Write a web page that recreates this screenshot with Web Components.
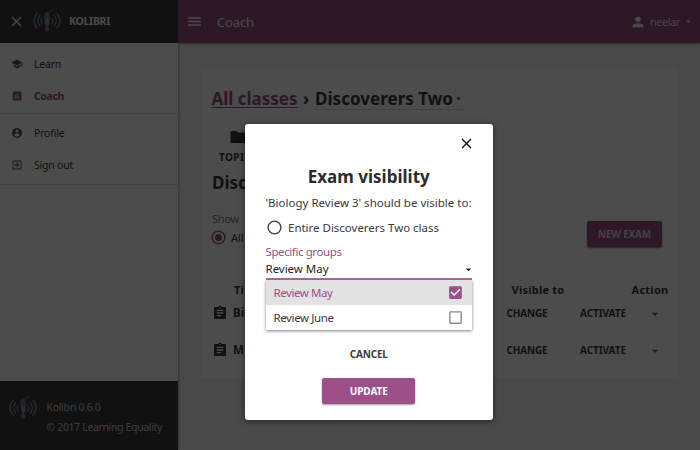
<!DOCTYPE html>
<html lang="en"><head><meta charset="utf-8"><title>Kolibri</title>
<style>
html,body{margin:0;height:100%;overflow:hidden;background:#f5f5f5}
body{font-family:"Noto Sans","Noto Sans CJK SC",sans-serif;font-size:11px;color:#3a3a3a}
</style></head><body>
<kolibri-app></kolibri-app>
<script>
const define=(name,html,after)=>customElements.define(name,class extends HTMLElement{
  connectedCallback(){
    if(this.shadowRoot)return;
    const t=document.createElement('template');t.innerHTML=html;
    this.attachShadow({mode:'open'}).append(t.content.cloneNode(true));
    if(after)after(this,this.shadowRoot);
  }
});

/* A single line of text, tracked to fill the width given in "w". */
define('fit-text',`<style>:host{display:block;white-space:nowrap;flex:none;line-height:16px}span{display:inline-block;text-decoration:inherit;text-underline-offset:inherit}</style><span><slot></slot></span>`,
(el,root)=>{
  const w=+el.getAttribute('w');if(!w)return;
  el.style.width=w+'px';
  const s=root.querySelector('span');
  s.style.letterSpacing=((w-s.getBoundingClientRect().width)/el.textContent.length)+'px';
});

const icons={
 close:'<path d="M19 6.4 17.6 5 12 10.6 6.4 5 5 6.4l5.6 5.6L5 17.6 6.4 19l5.6-5.6 5.6 5.6 1.4-1.4-5.6-5.6z"/>',
 menu:'<path d="M3 18h18v-2H3zm0-5h18v-2H3zm0-7v2h18V6z"/>',
 school:'<path d="M5 13.18v4L12 21l7-3.82v-4L12 17zM12 3 1 9l11 6 9-4.91V17h2V9z"/>',
 chart:'<path d="M19 3H5a2 2 0 0 0-2 2v14a2 2 0 0 0 2 2h14a2 2 0 0 0 2-2V5a2 2 0 0 0-2-2zM9 17H7v-7h2zm4 0h-2V7h2zm4 0h-2v-4h2z"/>',
 account:'<path d="M12 2a10 10 0 1 0 0 20 10 10 0 0 0 0-20zm0 3a3 3 0 1 1 0 6 3 3 0 0 1 0-6zm0 14.2a7.2 7.2 0 0 1-6-3.22c.03-1.99 4-3.08 6-3.08s5.970 1.090 6 3.080a7.200 7.200 0 0 1-6 3.220z"/>',
 exit:'<path d="M10.090 15.590 11.500 17l5-5-5-5-1.410 1.410L12.670 11H3v2h9.670zM19 3H5a2 2 0 0 0-2 2v4h2V5h14v14H5v-4H3v4a2 2 0 0 0 2 2h14a2 2 0 0 0 2-2V5a2 2 0 0 0-2-2z"/>',
 person:'<path d="M12 12a4 4 0 1 0 0-8 4 4 0 0 0 0 8zm0 2c-2.670 0-8 1.340-8 4v2h16v-2c0-2.660-5.330-4-8-4z"/>',
 caret:'<path d="m7 10 5 5 5-5z"/>',
 folder:'<path d="M10 4H4a2 2 0 0 0-2 2v12a2 2 0 0 0 2 2h16a2 2 0 0 0 2-2V8a2 2 0 0 0-2-2h-8z"/>',
 clipboard:'<path d="M19 3h-4.180a3 3 0 0 0-5.640 0H5a2 2 0 0 0-2 2v14a2 2 0 0 0 2 2h14a2 2 0 0 0 2-2V5a2 2 0 0 0-2-2zm-7 0a1 1 0 1 1 0 2 1 1 0 0 1 0-2zm2 14H7v-2h7zm3-4H7v-2h10zm0-4H7V7h10z"/>',
 checked:'<path d="M19 3H5a2 2 0 0 0-2 2v14a2 2 0 0 0 2 2h14a2 2 0 0 0 2-2V5a2 2 0 0 0-2-2zm-9 14-5-5 1.410-1.410L10 14.170l7.590-7.590L19 8z"/>',
 unchecked:'<path d="M19 5v14H5V5zm0-2H5a2 2 0 0 0-2 2v14a2 2 0 0 0 2 2h14a2 2 0 0 0 2-2V5a2 2 0 0 0-2-2z"/>',
 radio:'<path d="M12 2a10 10 0 1 0 0 20 10 10 0 0 0 0-20zm0 18a8 8 0 1 1 0-16 8 8 0 0 1 0 16z"/>',
 radioOn:'<path d="M12 2a10 10 0 1 0 0 20 10 10 0 0 0 0-20zm0 18a8 8 0 1 1 0-16 8 8 0 0 1 0 16z"/><circle cx="12" cy="12" r="5"/>'
};
define('ui-icon',`<style>:host{display:block;flex:none}svg{display:block;width:100%;height:100%;fill:currentColor}</style><svg viewBox="0 0 24 24"></svg>`,
(el,root)=>{const s=el.getAttribute('size');el.style.width=el.style.height=s+'px';root.querySelector('svg').innerHTML=icons[el.getAttribute('name')]});

define('bird-logo',`<style>:host{display:block;flex:none;width:30px;height:26px}svg{display:block}</style>
<svg width="30" height="26" viewBox="0 0 30 26" fill="none">
<g stroke="#8d7c98" stroke-width="1.300"><path d="M5.500 5Q-1.500 13 5.500 20.500"/><path d="M24.500 5q7 8 0 15.500"/></g>
<g stroke="#8292a3" stroke-width="1.200"><path d="M8 7q-4.500 6 0 11.500"/><path d="M22 7q4.500 6 0 11.500"/><path d="M10.500 9.500q-2.500 3.500 0 7"/><path d="M19.500 9.500q2.500 3.500 0 7"/></g>
<path d="M22 1c-2.500 1.800-5 2-5.500 3.700" stroke="#7d8e87" stroke-width="1"/>
<path d="M13 5q2-2 4.200 0l.6 4-.4 7q-2.300 3-4.500 0l-.5-6z" fill="#708088"/><path d="m13 10 3 2 1-3v8h-3z" fill="#8da4a8"/>
<path d="M14.300 16 12.800 22q2.200 3.500 4.400 0L15.800 16z" fill="#a36d99"/>
</svg>`);

define('nav-item',`<style>:host{display:flex;align-items:center;height:31.500px;padding-left:11px;color:#3a3a3a;font-size:10.500px}slot[name=icon]::slotted(*){margin-right:11px}:host(:not(.on)) slot[name=icon]::slotted(*){color:#555}</style><slot name="icon"></slot><slot></slot>`);

define('side-nav',`<style>
:host{display:flex;flex-direction:column;width:178px;height:450px;background:#fff;box-shadow:1px 0 2px rgba(0,0,0,.3)}
header{height:43px;background:#3a3a3a;color:#f5f5f5;display:flex;align-items:center;padding-left:7.500px;box-sizing:border-box}
header bird-logo{margin:-1px 7px 0 7.500px}header fit-text{font-weight:700;font-size:10.500px;margin-top:-1px}
nav{padding-top:5px;flex:1}
section{border-bottom:1px solid #e0e0e0;box-sizing:border-box}
section:first-child{height:66px;padding-top:.500px}section:last-child{height:71px;padding-top:3.500px}
.on{color:#9c5087;font-weight:700}
footer{height:69px;background:#3a3a3a;color:#c8c8c8;display:flex;box-sizing:border-box;padding:14px 0 0 7.500px;gap:9px;font-size:10.500px}
footer div{display:flex;flex-direction:column;gap:4px;padding-top:4px}
</style>
<header><ui-icon name="close" size="17"></ui-icon><bird-logo></bird-logo><fit-text w="41">KOLIBRI</fit-text></header>
<nav><section>
<nav-item><ui-icon slot="icon" name="school" size="12"></ui-icon><fit-text w="27">Learn</fit-text></nav-item>
<nav-item class="on"><ui-icon slot="icon" name="chart" size="12"></ui-icon><fit-text w="30">Coach</fit-text></nav-item></section><section>
<nav-item><ui-icon slot="icon" name="account" size="12"></ui-icon><fit-text w="30.500">Profile</fit-text></nav-item>
<nav-item><ui-icon slot="icon" name="exit" size="12"></ui-icon><fit-text w="39">Sign out</fit-text></nav-item></section></nav>
<footer><bird-logo></bird-logo><div><fit-text w="54">Kolibri 0.6.0</fit-text><fit-text w="115.500">© 2017 Learning Equality</fit-text></div></footer>`);

define('app-bar',`<style>
:host{display:flex;align-items:center;height:43px;box-sizing:border-box;padding:0 6px 0 8px;background:#9c5087;color:#f5f5f5;box-shadow:0 1px 2px rgba(0,0,0,.35)}
.title{font-size:13px;margin-left:14px;flex:1}.user{margin:0 3px 0 4.500px;color:#dcdcdc}
</style><ui-icon name="menu" size="17"></ui-icon><div class="title"><fit-text w="37">Coach</fit-text></div>
<ui-icon name="person" size="16"></ui-icon><fit-text class="user" w="30">neelar</fit-text><ui-icon name="caret" size="11"></ui-icon>`);

define('exam-row',`<style>
:host{display:grid;grid-template-columns:21px 273.500px 73.500px 67px 16px;align-items:center;height:37px;padding-left:11px;font-weight:700;color:#3a3a3a}
ui-icon[name=caret]{color:#9c5087;margin-top:2px}fit-text{font-size:10px}::slotted(*){color:#3a3a3a;font-size:11.500px}
</style><ui-icon name="clipboard" size="16"></ui-icon><slot></slot><fit-text w="41">CHANGE</fit-text><fit-text w="46">ACTIVATE</fit-text><ui-icon name="caret" size="16"></ui-icon>`);

define('coach-page',`<style>
:host{display:block;width:477px;height:311px;background:#fff;margin:24px 0 0 23px;box-sizing:border-box;padding-top:21px;color:#3a3a3a}
.crumbs{display:flex;height:22px;align-items:center;padding-left:10.500px;font-size:17px;font-weight:700}
.crumbs fit-text{line-height:20px}.link{color:#9c5087;text-decoration:underline 1px;text-underline-offset:2px}
.sep{margin:0 6px 0 5.500px}.cls{display:flex;align-items:center;border-bottom:1px solid #ddd}
.tabs{padding:18px 0 0 18px;height:56px;box-sizing:border-box;font-weight:700;font-size:10px}
.tabs ui-icon{margin-left:10px}.tabs fit-text{margin-top:2.500px}
h2{margin:0;height:29px;padding:2px 0 0 11px;box-sizing:border-box;font-size:17px}h2 fit-text{line-height:21px;margin-top:4px}
.filter{display:flex;justify-content:space-between;padding:0 16px 0 11px;height:64px}
.show{color:#777;padding-top:16px}.show div{display:flex;gap:4px;align-items:center;margin:2px 0 0 -2px;color:#3a3a3a}.show ui-icon{color:#9c5087}
.new{display:flex;align-items:center;justify-content:center;width:75px;height:26px;margin-top:26px;border-radius:2px;background:#9c5087;color:#d8d8d8;font-size:10px;font-weight:700;box-shadow:0 1px 2px rgba(0,0,0,.5)}
.head{display:grid;grid-template-columns:277.500px 120px 37px;height:32px;padding:20px 0 0 33px;box-sizing:border-box;font-weight:700;margin-top:3px}
</style>
<div class="crumbs"><fit-text class="link" w="86">All classes</fit-text><fit-text class="sep" w="6">›</fit-text><div class="cls"><fit-text w="138">Discoverers Two</fit-text><ui-icon name="caret" size="11"></ui-icon></div></div>
<div class="tabs"><ui-icon name="folder" size="18"></ui-icon><fit-text w="38">TOPICS</fit-text></div>
<h2><fit-text>Discover</fit-text></h2>
<div class="filter"><div class="show"><fit-text w="27">Show</fit-text><div><ui-icon name="radioOn" size="17"></ui-icon><fit-text w="12.500">All</fit-text></div></div><div class="new"><fit-text w="53">NEW EXAM</fit-text></div></div>
<div class="head"><fit-text w="25">Title</fit-text><fit-text w="53">Visible to</fit-text><fit-text w="37">Action</fit-text></div>
<exam-row><fit-text>Bio</fit-text></exam-row><exam-row><fit-text>M</fit-text></exam-row>`);

define('group-option',`<style>:host{display:flex;align-items:center;justify-content:space-between;height:25px;padding:0 8px;color:#3a3a3a;box-sizing:border-box}:host([selected]){background:#e2e2e2;color:#9c5087}ui-icon{color:#8a8a8a}:host([selected]) ui-icon{color:#9c5087;background:linear-gradient(#fff,#fff) center/10px 10px no-repeat}</style><slot></slot><ui-icon size="17"></ui-icon>`,
(el,root)=>{const i=root.querySelector('ui-icon');i.shadowRoot.querySelector('svg').innerHTML=icons[el.hasAttribute('selected')?'checked':'unchecked']});

define('exam-modal',`<style>
:host{display:block;width:248px;height:296px;background:#fff;border-radius:3px;box-shadow:0 1px 6px rgba(0,0,0,.5);box-sizing:border-box;padding:10.500px 21px 0 20.500px;color:#3a3a3a;font-size:11.500px}
.close{display:flex;justify-content:flex-end;color:#111;margin-right:-3px}
h1{margin:13.500px 0 0;display:flex;justify-content:center;font-size:17px;color:#2b2b2b}h1 fit-text{line-height:24px}
.q{margin-top:6px}.radio{display:flex;align-items:center;gap:5.500px;height:17px;margin:8px 0 0 0}
.radio ui-icon{color:#444}
.label{color:#9c5087;margin-top:8px}.value{display:flex;justify-content:space-between;align-items:center;border-bottom:2px solid #b56ba1;box-sizing:border-box;color:#222;height:20px}
.value ui-icon{margin-right:-3px}
.menu{box-shadow:0 1px 3px rgba(0,0,0,.5);height:50px}
.actions{display:flex;flex-direction:column;align-items:center;margin-top:16px;font-size:10px;font-weight:700}
.update{margin-top:16px;width:93px;height:26px;border-radius:2px;background:#9c5087;color:#fff;display:flex;align-items:center;justify-content:center;box-shadow:0 1px 2px rgba(0,0,0,.4)}
</style>
<div class="close"><ui-icon name="close" size="17"></ui-icon></div>
<h1><fit-text w="122">Exam visibility</fit-text></h1>
<fit-text class="q" w="206">'Biology Review 3' should be visible to:</fit-text>
<div class="radio"><ui-icon name="radio" size="17"></ui-icon><fit-text w="151">Entire Discoverers Two class</fit-text></div>
<fit-text class="label" w="76">Specific groups</fit-text>
<div class="value"><fit-text w="63">Review May</fit-text><ui-icon name="caret" size="13"></ui-icon></div>
<div class="menu"><group-option selected><fit-text w="59">Review May</fit-text></group-option><group-option><fit-text w="60">Review June</fit-text></group-option></div>
<div class="actions"><fit-text w="38">CANCEL</fit-text><div class="update"><fit-text w="38">UPDATE</fit-text></div></div>`);

define('kolibri-app',`<style>
:host{display:block;position:relative;width:700px;height:450px;overflow:hidden;background:#f5f5f5}
.shell{display:grid;grid-template-columns:178px 522px;height:450px}
.scrim{position:absolute;inset:0;background:rgba(0,0,0,.7)}
exam-modal{position:absolute;left:245px;top:124px}
</style><div class="shell"><side-nav></side-nav><main><app-bar></app-bar><coach-page></coach-page></main></div><div class="scrim"></div><exam-modal></exam-modal>`);
</script></body></html>
